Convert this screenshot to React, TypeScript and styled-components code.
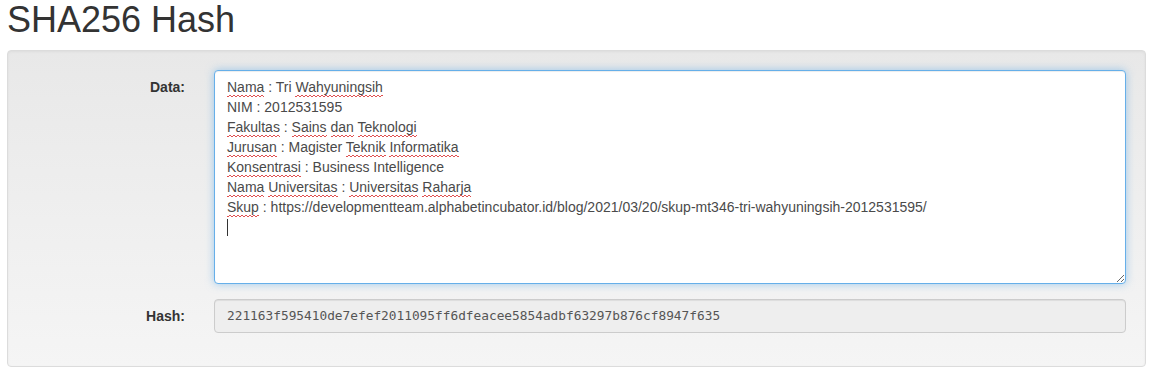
import styled, { createGlobalStyle } from 'styled-components';

const GlobalStyle = createGlobalStyle`
  body {
    margin: 0;
    background: #fff;
    font-family: "Liberation Sans", Arial, sans-serif;
    font-size: 14px;
    line-height: 1.42857;
    color: #333;
  }
`;

type Word = { text: string; typo?: boolean };

const lines: Word[][] = [
  [{ text: 'Nama', typo: true }, { text: ' : Tri ' }, { text: 'Wahyuningsih', typo: true }],
  [{ text: 'NIM : 2012531595' }],
  [
    { text: 'Fakultas', typo: true },
    { text: ' : ' },
    { text: 'Sains', typo: true },
    { text: ' ' },
    { text: 'dan', typo: true },
    { text: ' ' },
    { text: 'Teknologi', typo: true },
  ],
  [
    { text: 'Jurusan', typo: true },
    { text: ' : Magister ' },
    { text: 'Teknik', typo: true },
    { text: ' ' },
    { text: 'Informatika', typo: true },
  ],
  [{ text: 'Konsentrasi', typo: true }, { text: ' : Business Intelligence' }],
  [
    { text: 'Nama', typo: true },
    { text: ' ' },
    { text: 'Universitas', typo: true },
    { text: ' : ' },
    { text: 'Universitas', typo: true },
    { text: ' ' },
    { text: 'Raharja', typo: true },
  ],
  [
    { text: 'Skup', typo: true },
    { text: ' : https://developmentteam.alphabetincubator.id/blog/2021/03/20/skup-mt346-tri-wahyuningsih-2012531595/' },
  ],
];

const HASH = '221163f595410de7efef2011095ff6dfeacee5854adbf63297b876cf8947f635';

function App() {
  return (
    <Page>
      <GlobalStyle />
      <Title>SHA256 Hash</Title>
      <Well>
        <FormRow>
          <Label>Data:</Label>
          <DataBox spellCheck>
            {lines.map((line, i) => (
              <Line key={i}>
                {line.map((w, j) => (w.typo ? <Typo key={j}>{w.text}</Typo> : <span key={j}>{w.text}</span>))}
              </Line>
            ))}
            <Line>
              <Caret />
            </Line>
          </DataBox>
        </FormRow>
        <FormRow>
          <Label>Hash:</Label>
          <HashField>{HASH}</HashField>
        </FormRow>
      </Well>
    </Page>
  );
}

const Page = styled.div`
  padding: 0 5px 0 7px;
`;

const Title = styled.h1`
  margin: 0 0 10px;
  font-size: 36px;
  font-weight: 500;
  line-height: 1.1;
  color: #333;
`;

const Well = styled.div`
  display: flex;
  flex-direction: column;
  gap: 15px;
  padding: 19px 19px 33px;
  border: 1px solid #dcdcdc;
  border-radius: 4px;
  background: linear-gradient(to bottom, #e8e8e8 0, #f5f5f5 100%);
  box-shadow: inset 0 1px 3px rgba(0, 0, 0, 0.05), 0 1px 0 rgba(255, 255, 255, 0.1);
`;

const FormRow = styled.div`
  display: grid;
  grid-template-columns: 158px 1fr;
  column-gap: 29px;
  align-items: start;
`;

const Label = styled.label`
  padding-top: 7px;
  text-align: right;
  font-weight: bold;
  font-size: 14px;
  line-height: 20px;
  color: #333;
`;

const DataBox = styled.div`
  box-sizing: border-box;
  height: 214px;
  padding: 6px 12px;
  background: #fff;
  border: 1px solid #66afe9;
  border-radius: 4px;
  box-shadow: inset 0 1px 1px rgba(0, 0, 0, 0.075), 0 0 8px rgba(102, 175, 233, 0.6);
  color: #4a4a4a;
  font-size: 14px;
  line-height: 20px;
  overflow: auto;
  resize: both;
`;

const Line = styled.div`
  height: 20px;
  white-space: pre;
`;

/* small spell-check squiggle drawn as a zigzag under the word */
const Typo = styled.span`
  padding-bottom: 2px;
  background-image:
    linear-gradient(135deg, transparent 35%, #e05050 35%, #e05050 65%, transparent 65%),
    linear-gradient(45deg, transparent 35%, #e05050 35%, #e05050 65%, transparent 65%);
  background-size: 4px 2px;
  background-position: 0 100%, 2px 100%;
  background-repeat: repeat-x;
`;

const Caret = styled.span`
  display: inline-block;
  width: 1px;
  height: 17px;
  margin-top: 2px;
  background: #333;
  vertical-align: top;
`;

const HashField = styled.div`
  box-sizing: border-box;
  height: 34px;
  padding: 6px 12px;
  background: #eee;
  border: 1px solid #ccc;
  border-radius: 4px;
  box-shadow: inset 0 1px 1px rgba(0, 0, 0, 0.075);
  color: #555;
  font-family: "DejaVu Sans Mono", "Liberation Mono", monospace;
  font-size: 12.8px;
  line-height: 20px;
`;

export default App;
